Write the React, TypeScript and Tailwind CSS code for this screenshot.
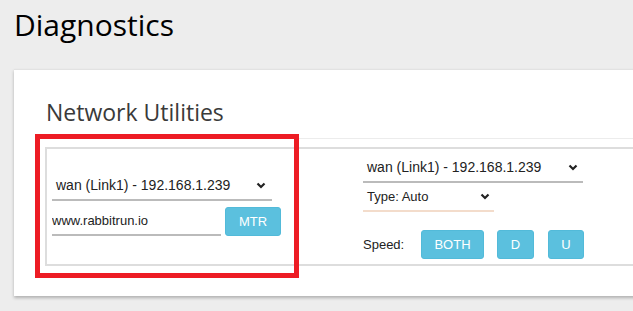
import { ReactNode } from 'react';

const Chevron = () => (
  <svg width="10" height="7" viewBox="0 0 10 7" className="shrink-0">
    <polyline points="1.5,1.5 5,5 8.5,1.5" fill="none" stroke="#222" strokeWidth="2.2" />
  </svg>
);

function SelectBox({ label, width, line, chevronPad }: { label: string; width: string; line: string; chevronPad: string }) {
  return (
    <div className={`${width} ${line} h-[30px] flex items-center justify-between border-b-2 pl-[4px] ${chevronPad}`}>
      <span className="text-[14px] text-[#222]">{label}</span>
      <Chevron />
    </div>
  );
}

function Btn({ children, width }: { children: ReactNode; width: string }) {
  return (
    <button
      className={`${width} h-[29px] rounded-[3px] bg-[#5bc0de] border border-[#52bad9] text-white text-[13px] leading-none`}
    >
      {children}
    </button>
  );
}

export default function App() {
  return (
    <div className="w-[633px] h-[311px] overflow-hidden bg-[#ededed] font-['Liberation_Sans',Arial,sans-serif]">
      <h1 className="pl-[14px] pt-[7px] h-[69px] text-[30px] leading-[36px] text-black font-['Open_Sans',sans-serif]">
        Diagnostics
      </h1>

      <div className="relative ml-[14px] w-[700px] bg-white border-t border-[#e2e2e2] pl-[31px] pt-[28px] pb-[30px] shadow-[0_2px_3px_rgba(0,0,0,0.25)]">
        <h2 className="ml-[1px] text-[23px] leading-[28px] text-[#3a3a3a] font-['Open_Sans',sans-serif]">
          Network Utilities
        </h2>

        <div className="mt-[12px] border-t border-[#ececec] pt-[8px]">
          <div className="flex w-[700px] h-[119px] border-2 border-[#dddddd]">
            {/* MTR */}
            <div className="w-[250px] pl-[5px] pt-[22px] flex flex-col gap-[5px]">
              <SelectBox label="wan (Link1) - 192.168.1.239" width="w-[220px]" line="border-[#bbbbbb]" chevronPad="pr-[6px]" />
              <div className="flex items-end gap-[4px]">
                <input
                  readOnly
                  value="www.rabbitrun.io"
                  className="w-[169px] h-[30px] border-b-2 border-[#bbbbbb] text-[13px] text-[#222] outline-none bg-transparent"
                />
                <Btn width="w-[56px]">MTR</Btn>
              </div>
            </div>

            {/* Speed test */}
            <div className="pl-[66px] pt-[4px] flex flex-col">
              <SelectBox label="wan (Link1) - 192.168.1.239" width="w-[220px]" line="border-[#bbbbbb]" chevronPad="pr-[5px]" />
              <div className="w-[131px] h-[29px] flex items-center justify-between border-b-2 border-[#f3dccb] pl-[4px] pr-[4px]">
                <span className="text-[13px] text-[#222]">Type: Auto</span>
                <Chevron />
              </div>
              <div className="mt-[18px] flex items-center">
                <span className="w-[58px] text-[13px] text-[#222]">Speed:</span>
                <Btn width="w-[63px]">BOTH</Btn>
                <div className="ml-[13px]">
                  <Btn width="w-[37px]">D</Btn>
                </div>
                <div className="ml-[14px]">
                  <Btn width="w-[36px]">U</Btn>
                </div>
              </div>
            </div>
          </div>
        </div>

        {/* annotation */}
        <div className="absolute left-[21px] top-[64px] w-[264px] h-[144px] border-[5px] border-[#ed1c24]" />
      </div>
    </div>
  );
}
